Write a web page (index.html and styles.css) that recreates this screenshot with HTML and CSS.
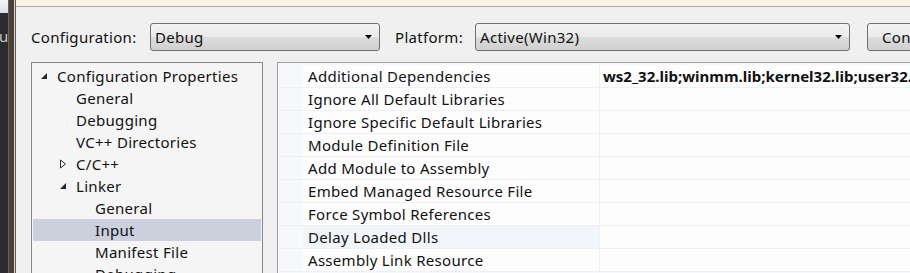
FILE: index.html
```html
<!DOCTYPE html>
<html>
<head>
<meta charset="utf-8">
<link rel="stylesheet" href="styles.css">
</head>
<body>
<div class="screen">
  <div class="backwin">
    <div class="backdark"><div class="backtop"></div><span class="backu">u</span></div>
    <div class="backframe"></div>
  </div>
  <div class="dialog">
    <div class="titlestrip"></div>
    <div class="toolbar">
      <span class="label label-config">Configuration:</span>
      <div class="combo combo-config"><span class="combo-text">Debug</span><svg class="combo-arrow" width="7" height="4" viewBox="0 0 7 4"><path d="M0 0H7L3.5 4Z" fill="#000"/></svg></div>
      <span class="label label-platform">Platform:</span>
      <div class="combo combo-platform"><span class="combo-text">Active(Win32)</span><svg class="combo-arrow" width="7" height="4" viewBox="0 0 7 4"><path d="M0 0H7L3.5 4Z" fill="#000"/></svg></div>
      <div class="button"><span>Configuration Manager...</span></div>
    </div>
    <div class="main">
      <div class="tree">
        <div class="node lvl0"><span class="twisty"><svg width="8" height="8" viewBox="0 0 8 8"><path d="M7 1V7H1Z" fill="#262626"/></svg></span>Configuration Properties</div>
        <div class="node lvl1"><span class="twisty"></span>General</div>
        <div class="node lvl1"><span class="twisty"></span>Debugging</div>
        <div class="node lvl1"><span class="twisty"></span>VC++ Directories</div>
        <div class="node lvl1"><span class="twisty"><svg width="8" height="10" viewBox="0 0 8 10"><path d="M1.5 1V9L6.5 5Z" fill="none" stroke="#262626" stroke-width="1"/></svg></span>C/C++</div>
        <div class="node lvl1"><span class="twisty"><svg width="8" height="8" viewBox="0 0 8 8"><path d="M7 1V7H1Z" fill="#262626"/></svg></span>Linker</div>
        <div class="node lvl2"><span class="twisty"></span>General</div>
        <div class="node lvl2 selected"><span class="twisty"></span>Input</div>
        <div class="node lvl2"><span class="twisty"></span>Manifest File</div>
        <div class="node lvl2"><span class="twisty"></span>Debugging</div>
      </div>
      <div class="grid">
        <div class="row"><div class="margin"></div><div class="name">Additional Dependencies</div><div class="value bold">ws2_32.lib;winmm.lib;kernel32.lib;user32.lib;gdi32.lib;winspool.lib</div></div>
        <div class="row"><div class="margin"></div><div class="name">Ignore All Default Libraries</div><div class="value"></div></div>
        <div class="row"><div class="margin"></div><div class="name">Ignore Specific Default Libraries</div><div class="value"></div></div>
        <div class="row"><div class="margin"></div><div class="name">Module Definition File</div><div class="value"></div></div>
        <div class="row"><div class="margin"></div><div class="name">Add Module to Assembly</div><div class="value"></div></div>
        <div class="row"><div class="margin"></div><div class="name">Embed Managed Resource File</div><div class="value"></div></div>
        <div class="row"><div class="margin"></div><div class="name">Force Symbol References</div><div class="value"></div></div>
        <div class="row hover"><div class="margin"></div><div class="name">Delay Loaded Dlls</div><div class="value"></div></div>
        <div class="row"><div class="margin"></div><div class="name">Assembly Link Resource</div><div class="value"></div></div>
      </div>
    </div>
  </div>
</div>
</body>
</html>
```
FILE: styles.css
```css
html, body {
  margin: 0;
  padding: 0;
}
body {
  width: 910px;
  height: 273px;
  overflow: hidden;
  background: #f0f0f0;
  font-family: "Noto Sans", "Open Sans", sans-serif;
  font-size: 15px;
  letter-spacing: 0.3px;
  color: #111;
}
.screen {
  display: flex;
  height: 273px;
}
.backwin {
  display: flex;
  width: 16px;
  flex: none;
}
.backdark {
  width: 8px;
  background: #2b2b2f;
  overflow: hidden;
  display: flex;
  flex-direction: column;
}
.backtop {
  height: 13px;
  flex: none;
  background: linear-gradient(#f4f6f8, #d9e0e8);
}
.backu {
  color: #c8c8c8;
  font-size: 15px;
  line-height: 16px;
  margin-top: 15px;
  margin-left: -1px;
}
.backframe {
  width: 8px;
  background: linear-gradient(to right, #6b6157 0, #6b6157 1px, #4a4038 1px, #4a4038 6px, #dcd4cc 6px, #dcd4cc 7px, #5d5d5d 7px);
}
.dialog {
  flex: 1;
  display: flex;
  flex-direction: column;
  min-width: 0;
}
.titlestrip {
  height: 6px;
  background: #fdf1e4;
  border-bottom: 1px solid #a8a8a8;
  flex: none;
}
.toolbar {
  display: flex;
  align-items: center;
  height: 28px;
  margin-top: 16px;
  padding-left: 15px;
  white-space: nowrap;
}
.label {
  flex: none;
}
.label-config {
  width: 119px;
}
.label-platform {
  width: 80px;
  margin-left: 15px;
}
.combo {
  box-sizing: border-box;
  height: 28px;
  border: 1px solid #707070;
  border-radius: 3px;
  background: linear-gradient(#f2f2f2 0, #ebebeb 50%, #dddddd 51%, #cfcfcf 100%);
  display: flex;
  align-items: center;
  padding-left: 4px;
  padding-right: 7px;
  flex: none;
}
.combo-config {
  width: 230px;
}
.combo-platform {
  width: 375px;
}
.combo-text {
  flex: 1;
}
.combo-arrow {
  flex: none;
}
.button {
  box-sizing: border-box;
  height: 28px;
  width: 180px;
  margin-left: 17px;
  border: 1px solid #707070;
  border-radius: 3px;
  background: linear-gradient(#f2f2f2 0, #ebebeb 50%, #dddddd 51%, #cfcfcf 100%);
  padding-left: 14px;
  display: flex;
  align-items: center;
  flex: none;
}
.main {
  display: flex;
  margin-top: 11px;
  padding-left: 15px;
  flex: 1;
  min-height: 0;
}
.tree {
  box-sizing: border-box;
  width: 232px;
  flex: none;
  border: 1px solid #828790;
  border-bottom: none;
  background: #f5f5f5;
  padding: 2px 1px 0 1px;
  overflow: hidden;
}
.node {
  height: 22px;
  line-height: 22px;
  display: flex;
  align-items: center;
  white-space: nowrap;
}
.twisty {
  width: 23px;
  height: 22px;
  flex: none;
  display: flex;
  align-items: center;
  justify-content: flex-start;
  padding-left: 6px;
  box-sizing: border-box;
}
.lvl0 { padding-left: 1px; }
.lvl1 { padding-left: 20px; }
.lvl2 { padding-left: 39px; }
.selected {
  background: #cccfdc;
}
.grid {
  flex: 1;
  min-width: 0;
  margin-left: 14px;
  border-left: 1px solid #a0a0a0;
  border-top: 1px solid #a0a0a0;
  background: #f6f8fb;
  padding-top: 2px;
  overflow: hidden;
}
.row {
  display: flex;
  height: 23px;
  box-sizing: border-box;
  border-bottom: 1px solid #eef0f4;
  white-space: nowrap;
}
.margin {
  width: 25px;
  flex: none;
  background: #f6f8fb;
}
.name {
  width: 297px;
  flex: none;
  box-sizing: border-box;
  padding-left: 5px;
  line-height: 22px;
  background: #fdfdfd;
  border-right: 1px solid #eef0f4;
}
.hover .name {
  background: #f2f5fa;
}
.value {
  flex: 1;
  padding-left: 3px;
  line-height: 22px;
  background: #fdfdfd;
  overflow: hidden;
  letter-spacing: 0;
}
.bold {
  font-weight: bold;
}
```
